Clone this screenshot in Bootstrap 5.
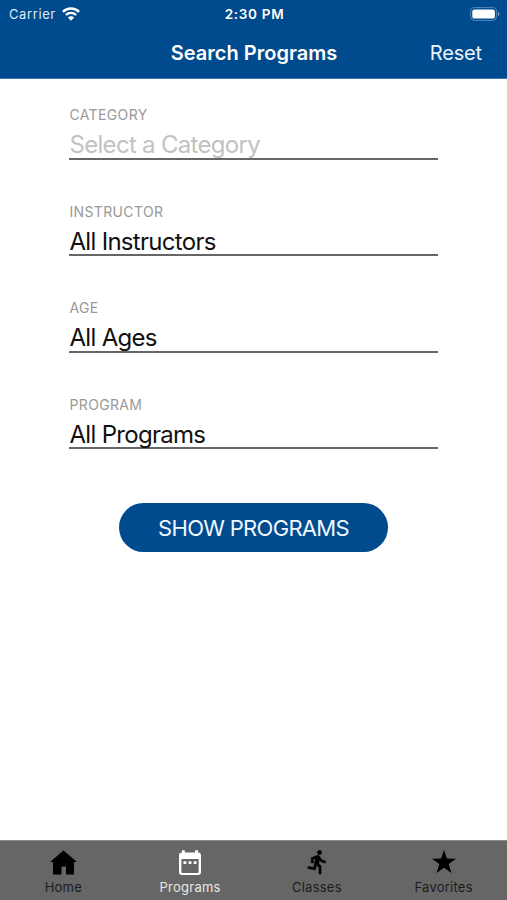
<!DOCTYPE html>
<html lang="en">
<head>
<meta charset="utf-8">
<meta name="viewport" content="width=device-width, initial-scale=1">
<title>Search Programs</title>
<link href="https://cdn.jsdelivr.net/npm/bootstrap@5.3.0/dist/css/bootstrap.min.css" rel="stylesheet">
<style>
body { font-family: Inter, "Liberation Sans", sans-serif; color: #111; }
svg { display: block; }
.app-top { background: #004b8d; height: 79px; border-bottom: 1px solid #3d7bb5; }
.status-bar { height: 28px; padding: 0 7px 0 9px; font-size: 13px; line-height: 28px; }
.status-bar svg { margin-top: -1px; }
.carrier { letter-spacing: .6px; color: #dfebf7; }
.wifi { margin-left: 6px; }
.clock { font-size: 13.5px; letter-spacing: .7px; }
.title-bar { height: 50px; padding: 0 25px; font-size: 20px; line-height: 50px; }
.screen-title { font-size: 20px; line-height: 50px; letter-spacing: .03px; padding-left: 1px; }
.reset-link { color: #edf5fd; letter-spacing: -.15px; }
.search-form { padding: 26px 69px 0; }
.field { height: 54.5px; margin-bottom: 42px; border-bottom: 2px solid #666; }
.field-label { display: block; font-size: 14px; line-height: 20.500px; letter-spacing: .35px; color: #999; padding-left: .5px; }
.field-value { display: block; font-size: 24px; line-height: 36px; letter-spacing: -.7px; margin-top: 1.5px; padding-left: .5px; white-space: nowrap; }
.hint { color: #c2c2c2; }
.show-btn { --bs-btn-color: #f0f7ff; --bs-btn-bg: #004b8d; --bs-btn-hover-bg: #003f78; --bs-btn-hover-color: #fff; width: 269px; height: 49px; margin-top: 12px; font-size: 22px; line-height: 1; letter-spacing: -.7px; }
.tab-bar { background: #666; height: 60px; border-top: 1px solid #888; }
.tab-item { color: #1c1c1c; font-size: 13px; line-height: 18px; padding-top: 9px; letter-spacing: .25px; }
.tab-item.active { color: #e6e6e6; }
.tab-item svg { color: #000; margin: 0 0 2px 1px; }
.tab-item.active svg { color: #fff; margin-left: 0; }
</style>
<script src="https://cdn.jsdelivr.net/npm/bootstrap@5.3.0/dist/js/bootstrap.bundle.min.js"></script>
</head>
<body class="bg-white vh-100 d-flex flex-column overflow-hidden">
<header class="app-top text-white flex-shrink-0">
  <div class="status-bar row g-0">
    <div class="col d-flex align-items-center"><span class="carrier">Carrier</span>
      <svg class="wifi" width="18" height="14" viewBox="0 0 18 14" fill="none" stroke="#fff" stroke-width="2.4"><path d="M.9 4.8a11.5 11.5 0 0 1 16.2 0M3.9 8a7.2 7.2 0 0 1 10.2 0"/><path d="M9 13.8 5.9 10.6a4.4 4.4 0 0 1 6.2 0z" fill="#fff" stroke="none"/></svg>
    </div>
    <div class="col-auto clock fw-semibold">2:30 PM</div>
    <div class="col d-flex align-items-center justify-content-end">
      <svg width="30" height="14" viewBox="0 0 30 14"><rect x=".6" y=".6" width="26" height="12.8" rx="4" fill="none" stroke="#5588b8"/><rect x="2.3" y="2.400" width="22.6" height="9.2" rx="2.2" fill="#fff"/><path d="M28 4.8q3.200 2.200 0 4.400z" fill="#7ba4ca"/></svg>
    </div>
  </div>
  <div class="title-bar row g-0">
    <div class="col"></div>
    <h1 class="col-auto screen-title fw-semibold m-0">Search Programs</h1>
    <div class="col text-end"><a href="#" class="reset-link text-decoration-none">Reset</a></div>
  </div>
</header>
<main class="search-form flex-grow-1">
  <div class="field"><span class="field-label">CATEGORY</span><span class="field-value hint">Select a Category</span></div>
  <div class="field"><span class="field-label">INSTRUCTOR</span><span class="field-value">All Instructors</span></div>
  <div class="field"><span class="field-label">AGE</span><span class="field-value">All Ages</span></div>
  <div class="field"><span class="field-label">PROGRAM</span><span class="field-value">All Programs</span></div>
  <div class="text-center"><button type="button" class="btn show-btn rounded-pill border-0">SHOW PROGRAMS</button></div>
</main>
<nav class="tab-bar row g-0 flex-shrink-0 text-center">
  <a href="#" class="tab-item col d-flex flex-column align-items-center text-decoration-none">
    <svg width="27" height="26" viewBox="0 0 27 26" fill="currentColor"><path d="M13.500 .5 27 12H24V24.500H16V16.500h-4.500v8H3V12H0z"/></svg>Home</a>
  <a href="#" class="tab-item active col d-flex flex-column align-items-center text-decoration-none">
    <svg width="24" height="26" viewBox="0 0 24 26" fill="currentColor"><path fill-rule="evenodd" d="M4 .2h2.800V2.500h10.400V.2H20V2.500q3 0 3 3v16.500q0 2.900-3 2.900H4q-3 0-3-2.900V5.500q0-3 3-3zM3.400 9V22q0 1 1 1h15.200q1 0 1-1V9z"/><path d="M5.500 11.300h2.800v2.800H5.500zm5.100 0h2.800v2.800h-2.800zm5.100 0h2.800v2.800h-2.800z"/></svg>Programs</a>
  <a href="#" class="tab-item col d-flex flex-column align-items-center text-decoration-none">
    <svg width="26" height="26" viewBox="-.5 1.200 23.500 23.500" fill="currentColor" stroke="currentColor" stroke-width=".4"><path d="M13.490 5.480c1.100 0 2-.9 2-2s-.9-2-2-2-2 .9-2 2 .9 2 2 2zm-3.600 13.900 1-4.400 2.100 2v6h2v-7.500l-2.100-2 .6-3c1.300 1.500 3.300 2.500 5.500 2.500v-2c-1.900 0-3.500-1-4.300-2.400l-1-1.600c-.4-.6-1-1-1.700-1-.3 0-.5.1-.8.1l-5.200 2.200v4.700h2v-3.400l1.800-.7-1.600 8.100-4.900-1-.4 2 7 1.400z"/></svg>Classes</a>
  <a href="#" class="tab-item col d-flex flex-column align-items-center text-decoration-none">
    <svg width="24" height="26" viewBox="0 0 24 26" fill="currentColor"><path d="m12 .1 2.900 8.500 9.100.1-7.300 5.400 2.700 9L12 17.800l-7.400 5.300 2.700-9L0 8.700l9.100-.1z"/></svg>Favorites</a>
</nav>
</body>
</html>
